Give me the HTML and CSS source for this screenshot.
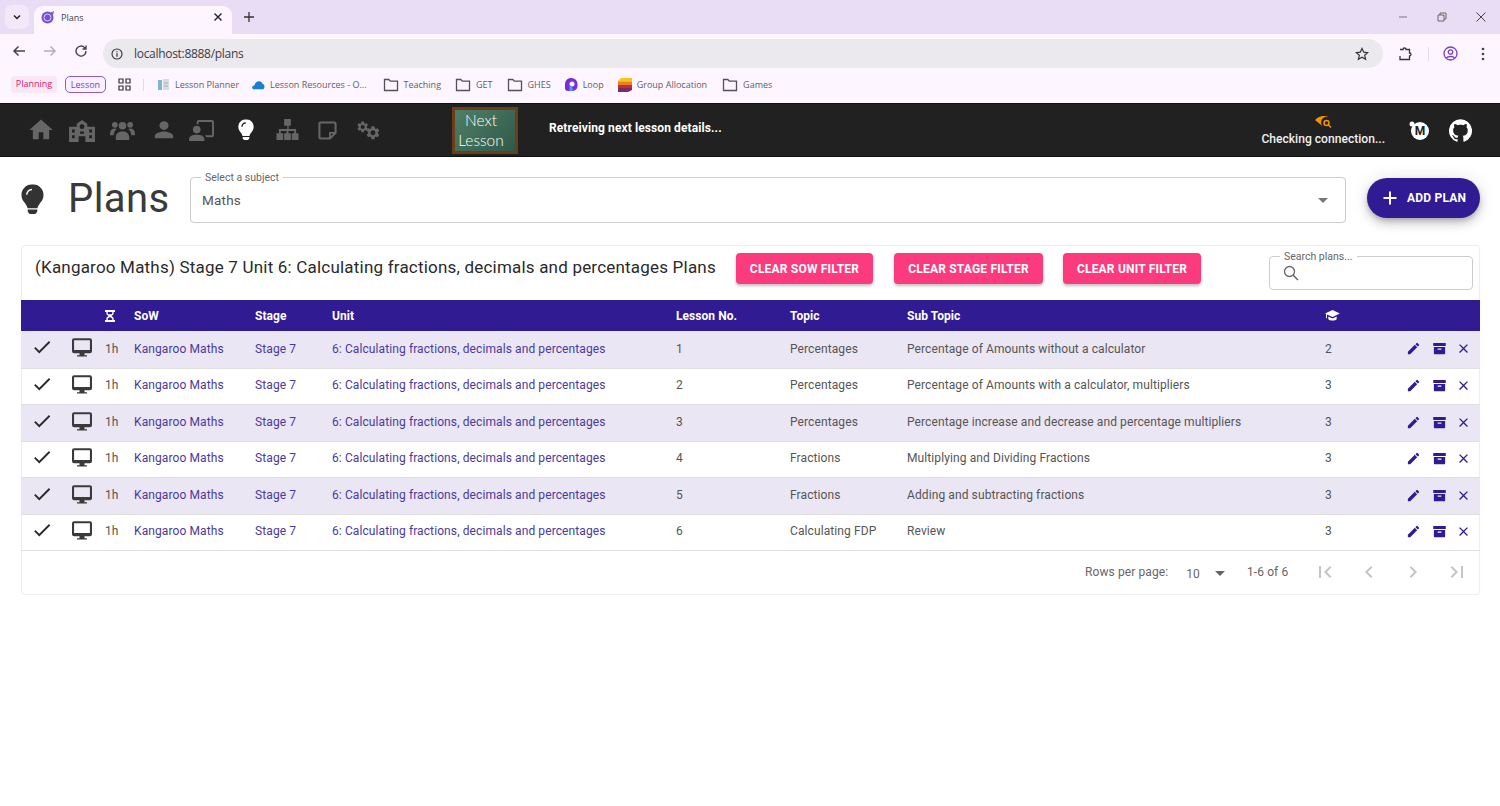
FILE: index.html
```html
<!DOCTYPE html>
<html lang="en">
<head>
    <meta charset="UTF-8">
    <title>Plans</title>
    <link rel="stylesheet" href="styles.css">
</head>
<body>
    <svg class="defs" width="0" height="0">
        <symbol id="i-bulb" viewBox="0 0 24 32"><path d="M12 0C5.400 0 .5 5 .5 11.200c0 3 1.100 5.600 2.900 7.700 1.200 1.400 2.900 4 3.500 6.100h10.200c.6-2.100 2.300-4.700 3.500-6.100 1.800-2.100 2.900-4.700 2.900-7.700C23.500 5 18.600 0 12 0z"/><path d="M7 26.500h10V28c0 .5-.2 1-.5 1.300l-1 1.200c-.4.500-1 .5-1.500.5h-4c-.5 0-1.100 0-1.500-.5l-1-1.200C7.200 29 7 28.500 7 28z"/></symbol>
        <symbol id="i-pencil" viewBox="0 0 24 24"><path d="M3 17.250V21h3.750L17.810 9.940l-3.750-3.750L3 17.250zM20.710 7.040a1 1 0 0 0 0-1.410l-2.340-2.340a1 1 0 0 0-1.410 0l-1.830 1.830 3.750 3.750 1.830-1.830z"/></symbol>
        <symbol id="i-archive" viewBox="0 0 24 24"><path d="M2 3h20v5H2zM3 9.500h18V20a1 1 0 0 1-1 1H4a1 1 0 0 1-1-1zM9 12v1.800h6V12z" fill-rule="evenodd"/></symbol>
        <symbol id="i-close" viewBox="0 0 24 24"><path d="M19 6.410 17.590 5 12 10.590 6.410 5 5 6.410 10.590 12 5 17.590 6.410 19 12 13.410 17.590 19 19 17.590 13.410 12z"/></symbol>
        <symbol id="i-check" viewBox="0 0 24 24"><path d="M9 16.170 4.830 12l-1.420 1.410L9 19 21 7l-1.410-1.410z"/></symbol>
        <symbol id="i-monitor" viewBox="0 0 24 24"><path d="M2.500 1.500h19A2.500 2.500 0 0 1 24 4v13a2.500 2.500 0 0 1-2.500 2.500h-19A2.500 2.500 0 0 1 0 17V4a2.500 2.500 0 0 1 2.500-2.500zM2.500 4v11.500h19V4zM9 19.500h6V22h3v1.500H6V22h3z" fill-rule="evenodd"/></symbol>
        <symbol id="i-folder" viewBox="0 0 16 14"><path d="M1.500 1.500h4.300l1.500 1.700h7.200v9.300h-13z" fill="none" stroke="currentColor" stroke-width="1.300"/></symbol>
        <symbol id="i-arrow" viewBox="0 0 10 5"><path d="M0 0h10L5 5z"/></symbol>
        <symbol id="i-gear" viewBox="0 0 24 24"><path d="M19.140 12.940c.04-.3.06-.61.06-.94 0-.32-.02-.64-.07-.94l2.030-1.580c.18-.14.23-.41.12-.61l-1.920-3.320c-.12-.22-.37-.29-.59-.22l-2.390.96c-.5-.38-1.030-.7-1.620-.94l-.36-2.540c-.04-.24-.24-.41-.48-.41h-3.840c-.24 0-.43.17-.47.41l-.36 2.540c-.59.24-1.130.57-1.620.94l-2.390-.96c-.22-.08-.47 0-.59.22L2.740 8.870c-.12.21-.08.47.12.61l2.030 1.580c-.05.3-.09.63-.09.94s.02.64.07.94l-2.030 1.580c-.18.14-.23.41-.12.61l1.920 3.320c.12.22.37.29.59.22l2.390-.96c.5.38 1.030.7 1.620.94l.36 2.540c.05.24.24.41.48.41h3.840c.24 0 .44-.17.47-.41l.36-2.540c.59-.24 1.130-.56 1.620-.94l2.390.96c.22.08.47 0 .59-.22l1.920-3.320c.12-.22.07-.47-.12-.61l-2.010-1.580zM12 15.600c-1.980 0-3.600-1.620-3.600-3.600s1.620-3.600 3.600-3.600 3.600 1.620 3.600 3.600-1.620 3.600-3.600 3.600z"/></symbol>
    </svg>

    <div class="tabstrip">
        <div class="tab-menu"><svg width="10" height="10" viewBox="0 0 10 10"><path d="M2 3.500 5 6.500 8 3.500" fill="none" stroke="#222" stroke-width="1.500"/></svg></div>
        <div class="tab">
            <svg class="favicon" width="14" height="14" viewBox="0 0 14 14"><circle cx="6.500" cy="7.500" r="6" fill="#7a4fd8"/><circle cx="6.500" cy="7.500" r="3.500" fill="none" stroke="#dcd0f5" stroke-width="1"/><path d="M9 3l4-2-1 4z" fill="#7a4fd8"/></svg>
            <span class="tab-title">Plans</span>
            <svg class="tab-x" width="10" height="10" viewBox="0 0 10 10"><path d="M1.500 1.500l7 7M8.500 1.500l-7 7" stroke="#222" stroke-width="1.400"/></svg>
        </div>
        <svg class="tab-new" width="12" height="12" viewBox="0 0 12 12"><path d="M6 1v10M1 6h10" stroke="#333" stroke-width="1.300"/></svg>
        <div class="win-btns">
            <svg width="10" height="10" viewBox="0 0 10 10"><path d="M1 5h8" stroke="#777" stroke-width="1"/></svg>
            <svg width="10" height="10" viewBox="0 0 10 10"><path d="M1 3h6v6H1zM3 3V1h6v6H7" fill="none" stroke="#666" stroke-width="1"/></svg>
            <svg width="10" height="10" viewBox="0 0 10 10"><path d="M.5.500l9 9M9.500.500l-9 9" stroke="#444" stroke-width="1"/></svg>
        </div>
    </div>

    <div class="toolbar">
        <svg class="nav-icon" width="14" height="14" viewBox="0 0 14 14"><path d="M13 7H2M6.500 2.500 2 7l4.500 4.500" fill="none" stroke="#444" stroke-width="1.500"/></svg>
        <svg class="nav-icon" width="14" height="14" viewBox="0 0 14 14"><path d="M1 7h11M7.500 2.500 12 7l-4.500 4.500" fill="none" stroke="#b4b0b8" stroke-width="1.500"/></svg>
        <svg class="nav-icon" width="14" height="14" viewBox="0 0 14 14"><path d="M12 7a5 5 0 1 1-1.500-3.500L12 5M12 1.500V5H8.500" fill="none" stroke="#444" stroke-width="1.400"/></svg>
        <div class="addressbar">
            <svg width="12" height="12" viewBox="0 0 12 12"><circle cx="6" cy="6" r="5" fill="none" stroke="#333" stroke-width="1.100"/><path d="M6 5.200v3.500M6 3.200v1" stroke="#333" stroke-width="1.200"/></svg>
            <span class="url">localhost:8888/plans</span>
            <svg class="star" width="14" height="14" viewBox="0 0 14 14"><path d="M7 1.500l1.700 3.700 4 .4-3 2.700.9 4L7 10.300l-3.600 2 .9-4-3-2.700 4-.4z" fill="none" stroke="#333" stroke-width="1.200"/></svg>
        </div>
        <svg class="ext" width="15" height="15" viewBox="0 0 15 15"><path d="M2 3.500h3a1.500 1.500 0 0 1 3 0h3.500V7a1.500 1.500 0 0 1 0 3v3.500H2V10" fill="none" stroke="#333" stroke-width="1.300"/></svg>
        <span class="sep"></span>
        <svg class="profile" width="15" height="15" viewBox="0 0 15 15"><circle cx="7.500" cy="7.500" r="6.500" fill="none" stroke="#7b3fc4" stroke-width="1.300"/><circle cx="7.500" cy="6" r="2.200" fill="none" stroke="#7b3fc4" stroke-width="1.300"/><path d="M3.500 12c1-2 7-2 8 0" fill="none" stroke="#7b3fc4" stroke-width="1.300"/></svg>
        <svg class="kebab" width="4" height="14" viewBox="0 0 4 14"><circle cx="2" cy="2" r="1.300" fill="#444"/><circle cx="2" cy="7" r="1.300" fill="#444"/><circle cx="2" cy="12" r="1.300" fill="#444"/></svg>
    </div>

    <div class="bookmarks">
        <span class="chip chip-planning">Planning</span>
        <span class="chip chip-lesson">Lesson</span>
        <svg class="apps" width="13" height="13" viewBox="0 0 13 13"><path d="M1 1h4v4H1zM8 1h4v4H8zM1 8h4v4H1zM8 8h4v4H8z" fill="none" stroke="#333" stroke-width="1.200"/></svg>
        <span class="bm-sep"></span>
        <a class="bm bm-planner"><svg width="12" height="13" viewBox="0 0 12 13"><path d="M0 2h4v10H0z" fill="#7fb2dc"/><path d="M5 1h6v11H5z" fill="#d5dbe0"/><path d="M6 5h4M6 8h4" stroke="#a5b0b8"/></svg>Lesson Planner</a>
        <a class="bm bm-drive"><svg width="13" height="10" viewBox="0 0 14 10"><path d="M1 9.500C-.5 8 .3 5.500 2.500 5.500 3.500 2.500 5.500 1 7.500 1c2 0 3.500 1.300 4 3 2 .3 2.800 3.800.8 5.500z" fill="#1a7fd0"/></svg>Lesson Resources - O...</a>
        <a class="bm bm-teaching"><svg class="bm-folder" width="16" height="14"><use href="#i-folder"/></svg>Teaching</a>
        <a class="bm bm-get"><svg class="bm-folder" width="16" height="14"><use href="#i-folder"/></svg>GET</a>
        <a class="bm bm-ghes"><svg class="bm-folder" width="16" height="14"><use href="#i-folder"/></svg>GHES</a>
        <a class="bm bm-loop"><svg width="13" height="14" viewBox="0 0 13 14"><path d="M6.500 0a6 6 0 0 1 6 6v2a5 5 0 0 1-5 5H3a3 3 0 0 1-3-3V6a6 6 0 0 1 6.500-6z" fill="#7b2bdc"/><circle cx="7" cy="6" r="2.500" fill="#fdf5ff"/><path d="M4.500 6v7h3v-3z" fill="#38a8f0"/></svg>Loop</a>
        <a class="bm bm-group"><svg width="14" height="14" viewBox="0 0 14 14"><path d="M3 0h11v3.500H0V3z" fill="#f8c21c"/><path d="M0 3.500h14V7H0z" fill="#ef7d22"/><path d="M0 7h14v3H0z" fill="#c22f2f"/><path d="M0 10h14v2l-4 2H0z" fill="#7a2a6a"/></svg>Group Allocation</a>
        <a class="bm bm-games"><svg class="bm-folder" width="16" height="14"><use href="#i-folder"/></svg>Games</a>
    </div>

    <header class="appbar">
        <nav class="appnav">
            <svg class="nav-home" width="28" height="28" viewBox="0 0 24 24"><path d="M10 20v-6h4v6h5v-8h3L12 3 2 12h3v8z"/></svg>
            <svg class="nav-school" width="26" height="23" viewBox="0 0 27 24"><path d="M13.500 1 19 5v3h8v16H17v-6h-7v6H0V8h8V5zM13.500 5.500a2.500 2.500 0 1 0 0 5 2.500 2.500 0 0 0 0-5zM3 11v3h3v-3zM21 11v3h3v-3zM3 17v3h3v-3zM21 17v3h3v-3zM11.500 13v2.500h4V13z" fill-rule="evenodd"/></svg>
            <svg class="nav-group" width="25" height="21" viewBox="0 0 26 22"><circle cx="13" cy="6" r="4"/><circle cx="5" cy="5" r="3"/><circle cx="21" cy="5" r="3"/><path d="M6 21v-3c0-4 3-6 7-6s7 2 7 6v3zM0 14c0-3 2-5 5-5 1 0 1.500.2 2 .5-2 1.500-3 3.500-3.200 6.500H0zM26 14c0-3-2-5-5-5-1 0-1.500.2-2 .5 2 1.500 3 3.500 3.200 6.500H26z"/></svg>
            <svg class="nav-person" width="22" height="24" viewBox="0 0 24 24"><path d="M12 12c2.840 0 5-2.200 5-4.800S14.840 2.500 12 2.500 7 4.600 7 7.200 9.160 12 12 12zm0 1.500c-3.340 0-10 1.700-10 5V21h20v-2.500c0-3.300-6.660-5-10-5z"/></svg>
            <svg class="nav-teach" width="26" height="23" viewBox="0 0 27 24"><circle cx="8" cy="11" r="4"/><path d="M0 23v-2c0-3 3.500-4.500 8-4.500s8 1.500 8 4.500v2zM8 3a2 2 0 0 1 2-2h14a2 2 0 0 1 2 2v14a2 2 0 0 1-2 2h-6l-1.500-2H24V3H10v2.500H8z"/></svg>
            <svg class="nav-bulb" width="16" height="22" viewBox="0 0 24 32"><use href="#i-bulb"/><path d="M6 11c0-3 2.500-5.500 5.500-5.500" fill="none" stroke="#212121" stroke-width="2"/></svg>
            <svg class="nav-sitemap" width="23" height="22" viewBox="0 0 24 23"><path d="M8.500 0h7v7h-2.300v3.500H21V15h2.500v7h-7v-7H19v-2.500h-6V15h2.500v7h-7v-7H11v-2.500H5V15h2.500v7h-7v-7H3v-4.500h8.800V7H8.500z"/></svg>
            <svg class="nav-note" width="19" height="19" viewBox="0 0 20 20"><path d="M3 1.500h14a1.500 1.500 0 0 1 1.500 1.500v9.500l-6 6H3A1.500 1.500 0 0 1 1.500 17V3A1.500 1.500 0 0 1 3 1.500z" fill="none" stroke="currentColor" stroke-width="2.200"/><path d="M12.500 18.500v-6h6" fill="none" stroke="currentColor" stroke-width="1.800"/></svg>
            <svg class="nav-gears" width="25" height="21" viewBox="0 0 28 23"><svg x="0" y="0" width="15" height="15"><use href="#i-gear" width="15" height="15"/></svg><svg x="10" y="5" width="18" height="18"><use href="#i-gear" width="18" height="18"/></svg></svg>
        </nav>
        <div class="logo"><span>Next</span><span>Lesson</span></div>
        <div class="next-lesson">Retreiving next lesson details...</div>
        <div class="connection">
            <svg width="17" height="14" viewBox="0 0 17 14"><path d="M0 4C2.500 1.500 5.500 0 8.500 0c2.500 0 4.500.8 6.500 2.200A5 5 0 0 0 8 10.500z" fill="#f39200"/><circle cx="11.500" cy="7" r="2.500" fill="none" stroke="#f39200" stroke-width="1.500"/><path d="M13.500 9l2.500 2.500" stroke="#f39200" stroke-width="1.500"/></svg>
            <span>Checking connection...</span>
        </div>
        <svg class="mlogo" width="20" height="20" viewBox="0 0 20 20"><circle cx="11" cy="11" r="9" fill="#fff"/><circle cx="3" cy="4" r="2.500" fill="#fff"/><text x="11" y="15" text-anchor="middle" font-family="Roboto" font-weight="700" font-size="12" fill="#212121">M</text></svg>
        <svg class="github" width="25" height="25" viewBox="0 0 24 24"><path d="M12 1.270a11 11 0 00-3.480 21.460c.55.09.73-.28.73-.55v-1.840c-3.030.64-3.670-1.460-3.670-1.460-.55-1.290-1.280-1.650-1.280-1.650-.92-.65.1-.65.1-.65 1.100 0 1.730 1.100 1.730 1.100.92 1.650 2.570 1.200 3.210.92a2 2 0 01.64-1.470c-2.470-.27-5.040-1.190-5.040-5.500 0-1.100.46-2.100 1.200-2.840a3.760 3.760 0 010-2.930s.91-.28 3.110 1.100c1.800-.49 3.700-.49 5.500 0 2.100-1.380 3.020-1.100 3.020-1.100a3.760 3.760 0 010 2.930c.83.74 1.200 1.740 1.200 2.940 0 4.210-2.570 5.130-5.040 5.400.45.37.82.920.82 2.020v3.030c0 .27.1.64.73.55A11 11 0 0012 1.270"/></svg>
    </header>

    <main class="page">
        <div class="page-head">
            <svg class="head-bulb" width="23" height="31" viewBox="0 0 24 32"><use href="#i-bulb"/><path d="M6 11c0-3 2.500-5.500 5.500-5.500" fill="none" stroke="#fff" stroke-width="1.500"/></svg>
            <h1>Plans</h1>
            <div class="subject-select">
                <span class="float-label">Select a subject</span>
                <span class="subject-value">Maths</span>
                <svg class="select-arrow" width="10" height="5"><use href="#i-arrow"/></svg>
            </div>
            <button class="add-plan"><svg width="16" height="16" viewBox="0 0 16 16"><path d="M8 1.500v13M1.500 8h13" stroke="#fff" stroke-width="2"/></svg>ADD PLAN</button>
        </div>

        <section class="card">
            <div class="card-head">
                <h2>(Kangaroo Maths) Stage 7 Unit 6: Calculating fractions, decimals and percentages Plans</h2>
                <button class="btn-clear btn-sow">CLEAR SOW FILTER</button>
                <button class="btn-clear btn-stage">CLEAR STAGE FILTER</button>
                <button class="btn-clear btn-unit">CLEAR UNIT FILTER</button>
                <div class="search-box">
                    <span class="float-label">Search plans...</span>
                    <svg width="16" height="16" viewBox="0 0 16 16"><circle cx="6.500" cy="6.500" r="5" fill="none" stroke="#666" stroke-width="1.300"/><path d="M10 10l5 5" stroke="#666" stroke-width="1.500"/></svg>
                </div>
            </div>

            <table class="plans">
                <colgroup>
                    <col class="c-check"><col class="c-mode"><col class="c-time"><col class="c-sow"><col class="c-stage"><col class="c-unit"><col class="c-no"><col class="c-topic"><col class="c-sub"><col class="c-grade"><col class="c-actions">
                </colgroup>
                <thead>
                    <tr>
                        <th></th>
                        <th></th>
                        <th><svg class="th-icon" width="10" height="12" viewBox="0 0 11 13"><path d="M0 0h11v2H9.500v1.500c0 1.500-1.500 2.300-2.500 3 1 .7 2.500 1.500 2.500 3V11H11v2H0v-2h1.500V9.500c0-1.500 1.500-2.300 2.500-3-1-.7-2.500-1.500-2.500-3V2H0zM3 2v1.500c0 .5.3.8.6 1h3.800c.3-.2.6-.5.6-1V2zM3.600 9C3.300 9.200 3 9.500 3 10v1h5v-1c0-.5-.3-.8-.6-1L5.500 7.700z" fill-rule="evenodd"/></svg></th>
                        <th>SoW</th>
                        <th>Stage</th>
                        <th>Unit</th>
                        <th>Lesson No.</th>
                        <th>Topic</th>
                        <th>Sub Topic</th>
                        <th><svg class="th-icon" width="15" height="12" viewBox="0 0 16 13"><path d="M8 0l8 3.800-8 3.800-6-2.800v4.200H1V4.300L0 3.800zM3.500 7v3c1 2 8 2 9 0V7L8 9.200z"/></svg></th>
                        <th></th>
                    </tr>
                </thead>
                <tbody id="rows"></tbody>
            </table>

            <div class="pager">
                <span class="rows-label">Rows per page:</span>
                <span class="rows-value">10</span>
                <svg class="rows-arrow" width="10" height="5"><use href="#i-arrow"/></svg>
                <span class="rows-count">1-6 of 6</span>
                <svg class="pg pg-first" width="24" height="24" viewBox="0 0 24 24"><path d="M18.410 16.590 13.820 12l4.590-4.590L17 6l-6 6 6 6zM6 6h2v12H6z"/></svg>
                <svg class="pg" width="24" height="24" viewBox="0 0 24 24"><path d="M15.410 7.410 14 6l-6 6 6 6 1.410-1.410L10.830 12z"/></svg>
                <svg class="pg" width="24" height="24" viewBox="0 0 24 24"><path d="M10 6 8.590 7.410 13.170 12l-4.580 4.590L10 18l6-6z"/></svg>
                <svg class="pg" width="24" height="24" viewBox="0 0 24 24"><path d="M5.590 7.410 10.180 12l-4.590 4.590L7 18l6-6-6-6zM16 6h2v12h-2z"/></svg>
            </div>
        </section>
    </main>

    <script src="rows.js"></script>
</body>
</html>
```

FILE: rows.js
```js
const plans = [
    [1, "Percentages", "Percentage of Amounts without a calculator", 2],
    [2, "Percentages", "Percentage of Amounts with a calculator, multipliers", 3],
    [3, "Percentages", "Percentage increase and decrease and percentage multipliers", 3],
    [4, "Fractions", "Multiplying and Dividing Fractions", 3],
    [5, "Fractions", "Adding and subtracting fractions", 3],
    [6, "Calculating FDP", "Review", 3]
];

document.getElementById("rows").innerHTML = plans.map(p => `
    <tr>
        <td><svg class="ico-check" width="22" height="22"><use href="#i-check"/></svg></td>
        <td><svg class="ico-mode" width="20" height="20"><use href="#i-monitor"/></svg></td>
        <td>1h</td>
        <td class="link">Kangaroo Maths</td>
        <td class="link">Stage 7</td>
        <td class="link">6: Calculating fractions, decimals and percentages</td>
        <td>${p[0]}</td>
        <td>${p[1]}</td>
        <td>${p[2]}</td>
        <td>${p[3]}</td>
        <td class="actions">
            <svg width="15" height="15"><use href="#i-pencil"/></svg>
            <svg width="15" height="15"><use href="#i-archive"/></svg>
            <svg width="15" height="15"><use href="#i-close"/></svg>
        </td>
    </tr>`).join("");
```

FILE: styles.css
```css
* {
    box-sizing: border-box;
}
body {
    margin: 0;
    font-family: Roboto, sans-serif;
    background: #fff;
    color: #333;
    overflow: hidden;
}
.defs {
    position: absolute;
}

/* browser chrome */
.tabstrip {
    height: 34px;
    background: #e9dcf5;
    display: flex;
    align-items: flex-end;
}
.tab-menu {
    width: 24px;
    height: 24px;
    margin: 0 0 5px 5px;
    border-radius: 7px;
    background: #f2e8f9;
    display: flex;
    align-items: center;
    justify-content: center;
}
.tab {
    width: 198px;
    height: 28px;
    margin-left: 5px;
    background: #fdf5ff;
    border-radius: 9px 9px 0 0;
    display: flex;
    align-items: center;
    padding: 0 9px 6px 7px;
}
.tab-title {
    font: 9px "Open Sans", sans-serif;
    color: #444;
    margin-left: 6px;
    flex: 1;
}
.tab-new {
    margin: 0 0 11px 11px;
}
.win-btns {
    margin-left: auto;
    display: flex;
    gap: 29px;
    padding: 0 14px 12px 0;
}
.toolbar {
    height: 34px;
    background: #fdf5ff;
    display: flex;
    align-items: center;
    padding-left: 12px;
}
.nav-icon {
    margin-right: 17px;
}
.addressbar {
    width: 1280px;
    height: 29px;
    margin: 5px 0 0 -2px;
    background: #ebe8ee;
    border-radius: 15px;
    display: flex;
    align-items: center;
    padding: 0 14px 0 8px;
}
.url {
    font: 12px "Open Sans", sans-serif;
    color: #3c3c44;
    margin-left: 11px;
    letter-spacing: -.3px;
}
.star {
    margin-left: auto;
}
.ext {
    margin: 5px 0 0 15px;
}
.sep {
    width: 1px;
    height: 14px;
    background: #e4dcea;
    margin: 5px 0 0 15px;
}
.profile {
    margin: 5px 0 0 14px;
}
.kebab {
    margin: 5px 0 0 23px;
}
.bookmarks {
    height: 35px;
    background: #fdf5ff;
    display: flex;
    align-items: center;
    padding: 0 0 2px 11px;
    font: 9px "Open Sans", sans-serif;
    color: #60606a;
}
.chip {
    height: 17px;
    line-height: 16px;
    border-radius: 4px;
    text-align: center;
}
.chip-planning {
    width: 46px;
    background: #f8e8f4;
    color: #d0246e;
}
.chip-lesson {
    width: 41px;
    margin-left: 8px;
    border: 1px solid #8a5cd0;
    border-radius: 5px;
    color: #7a42c8;
    background: #f9f1ff;
}
.apps {
    margin-left: 12px;
}
.bm-sep {
    width: 1px;
    height: 12px;
    background: #e2dcea;
    margin-left: 12px;
}
.bm {
    display: flex;
    align-items: center;
    gap: 5px;
}
.bm-folder {
    color: #55505a;
}
.bm-planner {
    margin-left: 14px;
}
.bm-drive {
    margin-left: 13px;
}
.bm-teaching {
    margin-left: 16px;
}
.bm-get {
    margin-left: 14px;
}
.bm-ghes {
    margin-left: 14px;
}
.bm-loop {
    margin-left: 14px;
}
.bm-group {
    margin-left: 14px;
}
.bm-games {
    margin-left: 15px;
}

/* app bar */
.appbar {
    height: 54px;
    background: #212121;
    border-top: 1px solid #111;
    border-bottom: 1px solid #111;
    display: flex;
    align-items: center;
    color: #fff;
    fill: #fff;
}
.appnav {
    width: 452px;
    padding-left: 27px;
    display: flex;
    align-items: center;
    fill: #666;
    color: #666;
}
.nav-school {
    margin-left: 14px;
}
.nav-group {
    margin-left: 15px;
}
.nav-person {
    margin-left: 18px;
}
.nav-teach {
    margin-left: 14px;
}
.nav-bulb {
    margin-left: 23px;
    fill: #fff;
}
.nav-sitemap {
    margin-left: 22px;
}
.nav-note {
    margin-left: 19px;
}
.nav-gears {
    margin-left: 19px;
}
.logo {
    width: 66px;
    height: 47px;
    background: linear-gradient(135deg, #4f7f68, #2f5a48);
    border: 3px solid #6b3d1a;
    padding-right: 8px;
    display: flex;
    flex-direction: column;
    align-items: center;
    justify-content: center;
    font: 300 15.500px/20px Lato, sans-serif;
    color: #fff;
}
.next-lesson {
    margin-left: 31px;
    font-size: 12px;
    font-weight: 700;
    letter-spacing: .1px;
    margin-bottom: 4px;
}
.connection {
    margin-left: auto;
    display: flex;
    flex-direction: column;
    align-items: center;
    font-size: 12.100px;
    font-weight: 500;
    gap: 2px;
    color: #f0f0f0;
    padding-top: 2px;
}
.mlogo {
    margin-left: 24px;
}
.github {
    margin: 0 27px 0 19px;
}

/* page */
.page {
    padding: 20px 20px 0 21px;
}
.page-head {
    display: flex;
    align-items: flex-start;
}
.head-bulb {
    margin-top: 7px;
    fill: #333;
}
h1 {
    font-size: 40px;
    font-weight: 400;
    line-height: 44px;
    letter-spacing: .4px;
    margin: 0 0 0 24px;
    width: 122px;
    color: #3a3a3a;
}
.subject-select {
    position: relative;
    width: 1156px;
    height: 46px;
    border: 1px solid #ccc;
    border-radius: 4px;
    display: flex;
    align-items: center;
    justify-content: space-between;
    padding: 0 17px 0 11px;
    fill: #777;
}
.float-label {
    position: absolute;
    top: -6px;
    left: 10px;
    padding: 0 4px;
    background: #fff;
    font-size: 10.500px;
    line-height: 12px;
    color: #666;
}
.subject-value {
    font-size: 13.500px;
    letter-spacing: .2px;
    color: #555;
}
.add-plan {
    width: 113px;
    height: 40px;
    margin: 1px 0 0 21px;
    background: #311b92;
    color: #fff;
    border: 0;
    border-radius: 20px;
    font: 700 12px Roboto, sans-serif;
    letter-spacing: .2px;
    display: flex;
    align-items: center;
    gap: 9px;
    padding-left: 15px;
    box-shadow: 0 3px 5px -1px rgba(0, 0, 0, .2), 0 6px 10px 0 rgba(0, 0, 0, .14), 0 1px 18px 0 rgba(0, 0, 0, .12);
}
.card {
    margin-top: 22px;
    height: 350px;
    border: 1px solid #eee;
    border-radius: 4px;
    box-shadow: 0 0 1px rgba(0, 0, 0, .1);
}
.card-head {
    height: 54px;
    display: flex;
    align-items: flex-start;
}
h2 {
    font-size: 17px;
    font-weight: 400;
    line-height: 20px;
    letter-spacing: .2px;
    margin: 11px 0 0 13px;
    width: 701px;
    white-space: nowrap;
    color: #2a2a2a;
}
.btn-clear {
    height: 31px;
    margin-top: 7px;
    background: #fb3b7e;
    color: #fff;
    border: 0;
    border-radius: 4px;
    font: 700 12px Roboto, sans-serif;
    letter-spacing: .2px;
    box-shadow: 0 2px 3px rgba(0, 0, 0, .25);
    padding: 0;
}
.btn-sow {
    width: 137px;
}
.btn-stage {
    width: 149px;
    margin-left: 21px;
}
.btn-unit {
    width: 138px;
    margin-left: 20px;
}
.search-box {
    position: relative;
    width: 204px;
    height: 34px;
    margin: 10px 0 0 68px;
    border: 1px solid #ccc;
    border-radius: 4px;
    padding: 8px 0 0 13px;
}
.search-box svg {
    display: block;
}

/* table */
.plans {
    width: 1459px;
    margin-left: -1px;
    table-layout: fixed;
    border-collapse: collapse;
    font-size: 12px;
    color: #555;
}
.c-check { width: 51px; }
.c-mode { width: 33px; }
.c-time { width: 29px; }
.c-sow { width: 121px; }
.c-stage { width: 77px; }
.c-unit { width: 344px; }
.c-no { width: 114px; }
.c-topic { width: 117px; }
.c-sub { width: 418px; }
.c-grade { width: 75px; }
.c-actions { width: 80px; }
.plans thead tr {
    height: 31px;
    background: #311b92;
}
.plans th {
    padding: 0;
    text-align: left;
    color: #fff;
    font-weight: 700;
    letter-spacing: .05px;
}
.th-icon {
    display: block;
    fill: #fff;
}
.plans tbody tr {
    height: 36px;
    border-bottom: 1px solid #e0e0e0;
}
.plans tbody tr:nth-child(odd) {
    height: 37px;
    background: #ebe6f4;
}
.plans td {
    padding: 0 0 1px;
    white-space: nowrap;
    letter-spacing: .1px;
}
.plans tbody tr:nth-child(even) td {
    padding-bottom: 2px;
}
.ico-check {
    display: block;
    margin: 0 0 3px 10px;
    fill: #2a2a2a;
}
.ico-mode {
    display: block;
    margin-bottom: 3px;
    fill: #3a3a3a;
}
.plans td.link {
    color: #4a3a9c;
}
.plans td.actions {
    fill: #311b92;
    padding-left: 6px;
}
.plans td.actions svg {
    margin-right: 6px;
    vertical-align: middle;
}
.plans td.actions svg:first-child {
    margin-right: 8px;
}
.pager {
    height: 43px;
    display: flex;
    align-items: center;
    font-size: 12px;
    letter-spacing: .1px;
    white-space: nowrap;
    color: #666;
    fill: #c4c4c4;
    padding-left: 1063px;
}
.rows-value {
    margin: 3px 0 0 18px;
}
.rows-arrow {
    flex: none;
    margin: 2px 0 0 15px;
    fill: #666;
}
.rows-count {
    margin-left: 22px;
}
.pg-first {
    margin-left: 25px;
}
.pg {
    flex: none;
    margin-right: 20px;
}
```
